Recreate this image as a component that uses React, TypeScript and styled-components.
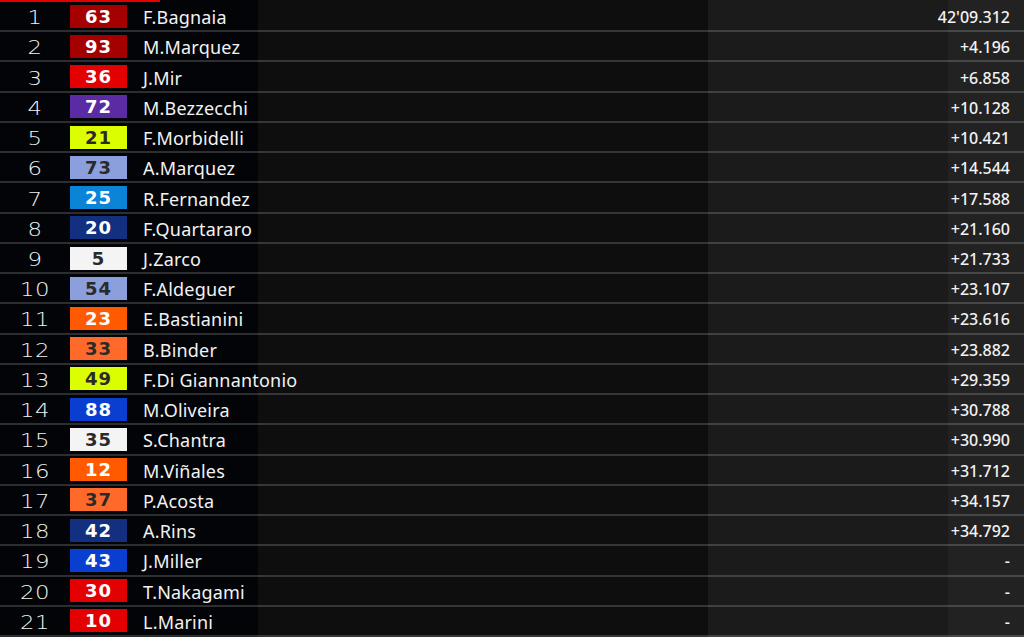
import styled, { createGlobalStyle } from "styled-components";

const GlobalStyle = createGlobalStyle`
  html, body {
    margin: 0;
    padding: 0;
    background: #020407;
  }
`;

type Rider = {
  pos: number;
  num: string;
  bg: string;
  dark?: boolean;
  name: string;
  time: string;
};

const riders: Rider[] = [
  { pos: 1, num: "63", bg: "#a50000", name: "F.Bagnaia", time: "42'09.312" },
  { pos: 2, num: "93", bg: "#a50000", name: "M.Marquez", time: "+4.196" },
  { pos: 3, num: "36", bg: "#e30000", name: "J.Mir", time: "+6.858" },
  { pos: 4, num: "72", bg: "#5a2ba2", name: "M.Bezzecchi", time: "+10.128" },
  { pos: 5, num: "21", bg: "#dcff00", dark: true, name: "F.Morbidelli", time: "+10.421" },
  { pos: 6, num: "73", bg: "#8b9fdc", dark: true, name: "A.Marquez", time: "+14.544" },
  { pos: 7, num: "25", bg: "#0b83d6", name: "R.Fernandez", time: "+17.588" },
  { pos: 8, num: "20", bg: "#122f80", name: "F.Quartararo", time: "+21.160" },
  { pos: 9, num: "5", bg: "#f4f4f4", dark: true, name: "J.Zarco", time: "+21.733" },
  { pos: 10, num: "54", bg: "#8b9fdc", dark: true, name: "F.Aldeguer", time: "+23.107" },
  { pos: 11, num: "23", bg: "#ff5a00", name: "E.Bastianini", time: "+23.616" },
  { pos: 12, num: "33", bg: "#ff6a2a", dark: true, name: "B.Binder", time: "+23.882" },
  { pos: 13, num: "49", bg: "#dcff00", dark: true, name: "F.Di Giannantonio", time: "+29.359" },
  { pos: 14, num: "88", bg: "#0a3ed0", name: "M.Oliveira", time: "+30.788" },
  { pos: 15, num: "35", bg: "#f4f4f4", dark: true, name: "S.Chantra", time: "+30.990" },
  { pos: 16, num: "12", bg: "#ff5a00", name: "M.Viñales", time: "+31.712" },
  { pos: 17, num: "37", bg: "#ff6a2a", dark: true, name: "P.Acosta", time: "+34.157" },
  { pos: 18, num: "42", bg: "#122f80", name: "A.Rins", time: "+34.792" },
  { pos: 19, num: "43", bg: "#0a3ed0", name: "J.Miller", time: "-" },
  { pos: 20, num: "30", bg: "#e30000", name: "T.Nakagami", time: "-" },
  { pos: 21, num: "10", bg: "#e30000", name: "L.Marini", time: "-" },
];

const Board = styled.div`
  position: relative;
  width: 1024px;
  height: 637px;
  box-sizing: border-box;
  padding-top: 2px;
  background: linear-gradient(
    to right,
    #020407 0px,
    #020407 258px,
    #0f0e0e 258px,
    #0f0e0e 708px,
    #1b1b1b 708px,
    #1b1b1b 948px,
    #222222 948px
  );
  display: grid;
  grid-template-rows: repeat(21, 1fr);
  overflow: hidden;
`;

const TopBar = styled.div`
  position: absolute;
  left: 0;
  top: 0;
  width: 160px;
  height: 2px;
  background: #e30000;
`;

const Row = styled.div`
  display: grid;
  grid-template-columns: 70px 57px 1fr auto;
  align-items: center;
  border-bottom: 2px solid rgba(255, 255, 255, 0.17);
  padding-right: 14px;
  min-height: 0;
`;

const Pos = styled.div`
  text-align: center;
  color: #f2f2f2;
  font-family: "DejaVu Sans", sans-serif;
  font-weight: 200;
  font-size: 19px;
  letter-spacing: 0.5px;
  padding-top: 2px;
  transform: scaleX(1.2);
`;

const NumBox = styled.div<{ $bg: string; $dark?: boolean }>`
  height: 23px;
  background: ${(p) => p.$bg};
  color: ${(p) => (p.$dark ? "#2a2a2a" : "#ffffff")};
  display: flex;
  align-items: center;
  justify-content: center;
  font-family: "DejaVu Sans", sans-serif;
  font-weight: 700;
  font-size: 18px;
  letter-spacing: 1px;
`;

const Name = styled.div`
  padding-left: 16px;
  padding-top: 2px;
  color: #f2f2f2;
  font-family: "Noto Sans", sans-serif;
  font-size: 18px;
  letter-spacing: 0.2px;
`;

const Time = styled.div`
  color: #f2f2f2;
  font-family: "Noto Sans", sans-serif;
  font-weight: 500;
  font-size: 16px;
  padding-top: 2px;
  text-align: right;
`;

export default function App() {
  return (
    <>
      <GlobalStyle />
      <Board>
        <TopBar />
        {riders.map((r) => (
          <Row key={r.pos}>
            <Pos>{r.pos}</Pos>
            <NumBox $bg={r.bg} $dark={r.dark}>
              {r.num}
            </NumBox>
            <Name>{r.name}</Name>
            <Time>{r.time}</Time>
          </Row>
        ))}
      </Board>
    </>
  );
}
